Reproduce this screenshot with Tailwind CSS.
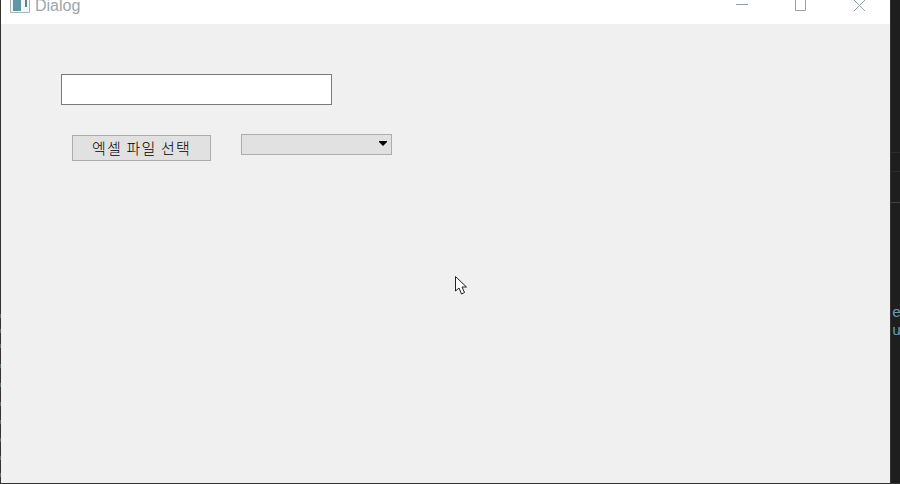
<!DOCTYPE html>
<html lang="en">
<head>
    <meta charset="UTF-8">
    <title>Dialog</title>
    <script src="https://cdn.jsdelivr.net/npm/@tailwindcss/browser@4"></script>
</head>
<body class="w-[900px] h-[484px] overflow-hidden bg-[#1e1e1e] font-['Liberation_Sans',sans-serif]">
    <div class="flex h-[483px]">
        <!-- editor behind the dialog, left edge -->
        <div class="w-px h-full bg-[#333333] relative">
            <div class="absolute left-0 top-[314px] w-px h-1 bg-[#566a6a]"></div>
            <div class="absolute left-0 top-[329px] w-px h-1 bg-[#566a6a]"></div>
            <div class="absolute left-0 top-[344px] w-px h-1 bg-[#566a6a]"></div>
            <div class="absolute left-0 top-[364px] w-px h-1 bg-[#566a6a]"></div>
            <div class="absolute left-0 top-[383px] w-px h-1 bg-[#566a6a]"></div>
            <div class="absolute left-0 top-[402px] w-px h-1 bg-[#566a6a]"></div>
            <div class="absolute left-0 top-[420px] w-px h-1 bg-[#566a6a]"></div>
            <div class="absolute left-0 top-[438px] w-px h-1 bg-[#566a6a]"></div>
            <div class="absolute left-0 top-[456px] w-px h-1 bg-[#566a6a]"></div>
            <div class="absolute left-0 top-[473px] w-px h-1 bg-[#566a6a]"></div>
        </div>

        <!-- dialog window -->
        <div class="w-[889px] h-full flex flex-col relative">
            <div class="h-6 bg-white flex justify-between overflow-hidden shrink-0">
                <div class="flex items-start gap-[5px] pl-[9px]">
                    <svg width="20" height="13" viewBox="0 0 20 13">
                        <path d="M0.5 0V12.5H19.5V0" fill="#f4f6f6" stroke="#a9b4b8"/>
                        <rect x="3" y="0" width="8" height="11" fill="#5f98a4"/>
                        <rect x="15" y="0" width="2" height="7" fill="#5f7f8a"/>
                    </svg>
                    <span class="text-[16px] leading-[16px] -mt-[2px] text-[#9aa6ab]">Dialog</span>
                </div>
                <div class="flex items-start pr-[24px]">
                    <svg width="13" height="6" viewBox="0 0 13 6" class="mr-[45px]"><path d="M0 4.5H12" stroke="#93a0a7"/></svg>
                    <svg width="13" height="12" viewBox="0 0 13 12" class="mr-[46px]"><path d="M1.5 0V10.5H11.5V0" fill="none" stroke="#93a0a7"/></svg>
                    <svg width="13" height="12" viewBox="0 0 13 12"><path d="M1 0L12 11M12 0L1 11" fill="none" stroke="#93a0a7"/></svg>
                </div>
            </div>

            <div class="flex-1 bg-[#f0f0f0] pt-[50px] pl-[60px]">
                <input type="text" class="block w-[271px] h-[31px] bg-white border border-[#7a7a7a] outline-none">
                <div class="flex items-start mt-[29px] ml-[11px]">
                    <button class="w-[139px] h-[26px] mt-px bg-[#e1e1e1] border border-[#adadad] text-[15px] leading-[22px] tracking-[1.2px] text-black font-light font-['Noto_Sans_CJK_KR',sans-serif]">엑셀 파일 선택</button>
                    <div class="w-[151px] h-[21px] ml-[30px] bg-[#e1e1e1] border border-[#adadad] flex justify-end items-center pr-[4px]">
                        <svg width="8" height="5" viewBox="0 0 8 5" class="mb-[2px]"><path d="M0 0H8V1L4 5L0 1Z" fill="#000"/></svg>
                    </div>
                </div>
            </div>

            <!-- mouse pointer -->
            <svg class="absolute left-[453px] top-[275px]" width="15" height="20" viewBox="0 0 15 20">
                <path d="M1.5 1.5V16L5 13L7.5 19L10.5 17.5L8 12H12.5Z" fill="#fff" stroke="#222" stroke-linejoin="round"/>
            </svg>
        </div>

        <!-- editor behind the dialog, right edge -->
        <div class="w-[10px] h-full bg-[#1e1e1e] border-l border-[#333333] relative overflow-hidden">
            <div class="absolute left-0 right-0 top-[152px] h-px bg-[#2b2b2b]"></div>
            <div class="absolute left-0 right-0 top-[171px] h-px bg-[#2b2b2b]"></div>
            <div class="absolute left-0 right-0 top-[202px] h-px bg-[#414141]"></div>
            <span class="absolute left-px top-[305px] text-[15px] leading-[18px] text-[#6a9fb0] font-['Liberation_Mono',monospace]">e</span>
            <span class="absolute left-px top-[323px] text-[15px] leading-[18px] text-[#6a9fb0] font-['Liberation_Mono',monospace]">u</span>
        </div>
    </div>
    <div class="h-px bg-[#333333]"></div>
</body>
</html>
